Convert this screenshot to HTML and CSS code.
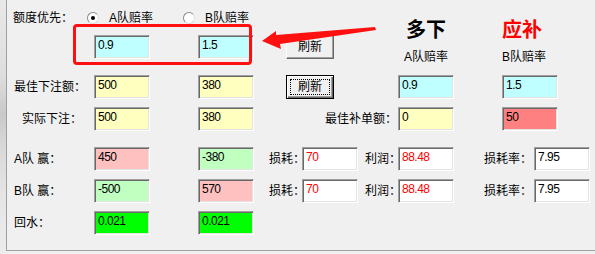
FILE: index.html
```html
<!DOCTYPE html>
<html lang="zh-CN">
<head>
    <meta charset="UTF-8">
    <title>额度计算</title>
    <link rel="stylesheet" href="styles.css">
</head>
<body>
    <div class="edge"></div>
    <div class="panel">
        <div class="top">
            <div class="pref">
                <span class="pref-label">额度优先：</span>
                <span class="opt"><span class="radio on"></span>A队赔率</span>
                <span class="opt"><span class="radio"></span>B队赔率</span>
            </div>
            <div class="head at-8">多下</div>
            <div class="head at-10 red">应补</div>
        </div>

        <div class="row first">
            <div class="box cyan at-2">0.9</div>
            <div class="box cyan at-4">1.5</div>
            <button class="btn at-6">刷新</button>
            <div class="sub at-8 center">A队赔率</div>
            <div class="sub at-10">B队赔率</div>
        </div>

        <div class="row gap-big">
            <div class="label">最佳下注额：</div>
            <div class="box yellow at-2">500</div>
            <div class="box yellow at-4">380</div>
            <button class="btn focus at-6"><span class="focus-ring">刷新</span></button>
            <div class="box cyan at-8">0.9</div>
            <div class="box cyan at-10">1.5</div>
        </div>

        <div class="row">
            <div class="label indent">实际下注：</div>
            <div class="box yellow at-2">500</div>
            <div class="box yellow at-4">380</div>
            <div class="label span-5-8">最佳补单额：</div>
            <div class="box yellow at-8">0</div>
            <div class="box salmon at-10">50</div>
        </div>

        <div class="row stats gap-big">
            <div class="label">A队 赢：</div>
            <div class="box pink at-2">450</div>
            <div class="box mint at-4">-380</div>
            <div class="label loss-label">损耗：</div>
            <div class="box white red at-6">70</div>
            <div class="label profit-label">利润：</div>
            <div class="box white red at-8">88.48</div>
            <div class="label rate-label">损耗率：</div>
            <div class="box white at-10">7.95</div>
        </div>

        <div class="row stats">
            <div class="label">B队 赢：</div>
            <div class="box mint at-2">-500</div>
            <div class="box pink at-4">570</div>
            <div class="label loss-label">损耗：</div>
            <div class="box white red at-6">70</div>
            <div class="label profit-label">利润：</div>
            <div class="box white red at-8">88.48</div>
            <div class="label rate-label">损耗率：</div>
            <div class="box white at-10">7.95</div>
        </div>

        <div class="row stats">
            <div class="label">回水：</div>
            <div class="box green at-2">0.021</div>
            <div class="box green at-4">0.021</div>
        </div>
    </div>

    <!-- annotation drawn over the form -->
    <div class="mark"></div>
    <svg class="arrow" width="125" height="35" viewBox="0 0 125 35">
        <polygon points="7,21 21,11 21,15 120,7 121,10 25,24 26,29" fill="#ff1010"/>
    </svg>
</body>
</html>
```

FILE: styles.css
```css
body {
    margin: 0;
    height: 254px;
    display: flex;
    background-color: #f0f0f0;
    font-family: "Liberation Sans", "Noto Sans CJK SC", sans-serif;
    font-size: 12px;
    line-height: 14px;
    color: #000;
    overflow: hidden;
    position: relative;
}

.edge {
    width: 6px;
    background: linear-gradient(to bottom, #e8e8e8 0%, #dedede 30%, #c8c8c8 45%, #d6d6d6 55%, #e4e4e4 75%, #ececec 100%);
}

.panel {
    flex: 1;
    height: 251px;
    box-sizing: border-box;
    border-left: 1px solid #a0a0a0;
    border-bottom: 1px solid #a0a0a0;
}

.top,
.row {
    display: grid;
    grid-template-columns: 87px 56px 48px 56px 32px 48px 64px 56px 48px 56px;
}

.top {
    height: 35px;
    grid-template-rows: 35px;
}

.row {
    height: 24px;
    grid-template-rows: 24px;
    margin-top: 8px;
    align-items: center;
}

.row.first {
    margin-top: 0;
}

.row.gap-big {
    margin-top: 16px;
}

.row.stats {
    grid-template-columns: 87px 56px 48px 56px 48px 56px 40px 56px 80px 56px;
}

.at-2 { grid-column: 2; }
.at-4 { grid-column: 4; }
.at-6 { grid-column: 6; }
.at-8 { grid-column: 8; }
.at-10 { grid-column: 10; }

/* top line: radio choice */
.pref {
    grid-column: 1 / 8;
    grid-row: 1;
    display: flex;
    align-items: center;
    height: 12px;
    margin-top: 12px;
    padding-left: 6px;
}

.pref-label {
    width: 74px;
}

.opt {
    display: flex;
    align-items: center;
    width: 96px;
    white-space: nowrap;
}

.radio {
    width: 12px;
    height: 12px;
    box-sizing: border-box;
    border-radius: 50%;
    border: 1px solid #8a8a8a;
    border-right-color: #dcdcdc;
    border-bottom-color: #dcdcdc;
    background-color: #fff;
    margin-right: 10px;
    display: flex;
    align-items: center;
    justify-content: center;
}

.radio.on::after {
    content: "";
    width: 4px;
    height: 4px;
    border-radius: 50%;
    background-color: #000;
}

.head {
    grid-row: 1;
    align-self: start;
    margin-top: 18px;
    font-family: "Noto Sans CJK SC", sans-serif;
    font-size: 20px;
    line-height: 22px;
    font-weight: bold;
    white-space: nowrap;
}

.head.at-8 {
    text-align: center;
}

.sub {
    align-self: start;
    padding-top: 15px;
    white-space: nowrap;
}

.center {
    text-align: center;
}

.red {
    color: #ff0000;
}

.label {
    grid-column: 1;
    padding-left: 7px;
    white-space: nowrap;
}

.label.indent {
    padding-left: 15px;
}

.label.span-5-8 {
    grid-column: 5 / 8;
    padding-left: 71px;
}

.stats .loss-label {
    grid-column: 5;
    padding-left: 15px;
}

.stats .profit-label {
    grid-column: 7;
    padding-left: 7px;
}

.stats .rate-label {
    grid-column: 9;
    padding-left: 30px;
}

/* sunken edit boxes */
.box {
    width: 56px;
    height: 24px;
    box-sizing: border-box;
    border: 1px solid;
    border-color: #a0a0a0 #fff #fff #a0a0a0;
    box-shadow: inset 1px 1px #696969, inset -1px -1px #e3e3e3;
    padding: 2px 0 0 3px;
    letter-spacing: -0.5px;
    white-space: nowrap;
    overflow: hidden;
}

.cyan { background-color: #c0ffff; }
.yellow { background-color: #ffffc0; }
.salmon { background-color: #ff8080; }
.pink { background-color: #ffc0c0; }
.mint { background-color: #c0ffc0; }
.green { background-color: #00ff00; }
.white { background-color: #fff; }

/* raised push buttons */
.btn {
    width: 48px;
    height: 24px;
    padding: 0;
    font: inherit;
    color: #000;
    background-color: #f0f0f0;
    border: 1px solid;
    border-color: #fff #696969 #696969 #fff;
    box-shadow: inset -1px -1px #a0a0a0;
    display: flex;
    align-items: center;
    justify-content: center;
}

.btn.focus {
    border-color: #000;
    box-shadow: inset 1px 1px #fff, inset -1px -1px #696969, inset -2px -2px #a0a0a0;
}

.focus-ring {
    width: 38px;
    height: 14px;
    border: 1px dotted #000;
    text-align: center;
}

.mark {
    position: absolute;
    left: 73px;
    top: 24px;
    width: 179px;
    height: 41px;
    box-sizing: border-box;
    border: 3px solid #ff1010;
    border-radius: 4px;
}

.arrow {
    position: absolute;
    left: 255px;
    top: 20px;
}
```
